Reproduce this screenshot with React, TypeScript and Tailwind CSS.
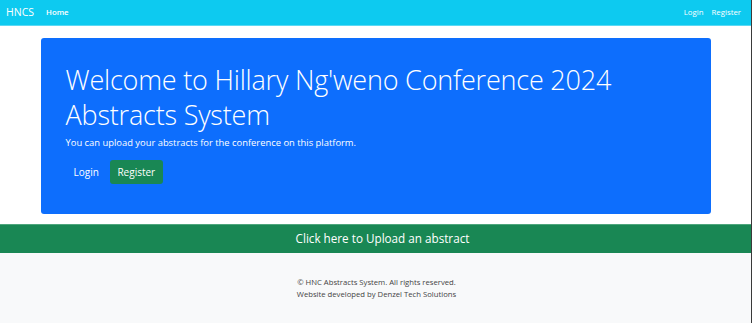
export default function App() {
  return (
    <div className="min-h-[323px] w-full border-r border-[#3a3a3a] bg-white font-['Open_Sans',sans-serif] flex flex-col">
      <nav className="h-[26px] bg-[#0dcaf0] flex items-center justify-between px-[6px] border-b border-[#5bd9f4]">
        <div className="flex items-center">
          <span className="text-white text-[10.5px] mr-[12px]">HNCS</span>
          <a className="text-white text-[7.8px] font-semibold">Home</a>
        </div>
        <div className="flex items-center gap-[8px] pr-[4px]">
          <a className="text-white text-[7.8px]">Login</a>
          <a className="text-white text-[7.8px]">Register</a>
        </div>
      </nav>

      <div className="pt-[12px] pb-[10px]">
        <div className="mx-auto w-[670px] h-[176px] bg-[#0d6efd] rounded-[3px] pl-[25px] pt-[24px]">
          <h1 className="text-white font-light text-[27px] leading-[35px] tracking-[-0.2px]">
            Welcome to Hillary Ng'weno Conference 2024
            <br />
            Abstracts System
          </h1>
          <p className="text-white text-[9.4px] leading-[15px] mt-[3px]">
            You can upload your abstracts for the conference on this platform.
          </p>
          <div className="flex items-center mt-[10px]">
            <a className="text-white text-[10px] px-[8px] h-[24px] flex items-center">Login</a>
            <a className="ml-[3px] bg-[#198754] text-white text-[10px] rounded-[3px] w-[53px] h-[24px] flex items-center justify-center">
              Register
            </a>
          </div>
        </div>
      </div>

      <a className="h-[29px] bg-[#198754] border-t border-[#4ea67d] flex items-center justify-center pl-[14px] text-white text-[11.7px]">
        Click here to Upload an abstract
      </a>

      <footer className="flex-1 bg-[#f8f9fa] flex flex-col items-center pt-[24px] pl-[2px] text-[7.7px] leading-[11.5px] text-[#444]">
        <p>© HNC Abstracts System. All rights reserved.</p>
        <p>Website developed by Denzel Tech Solutions</p>
      </footer>
    </div>
  );
}
